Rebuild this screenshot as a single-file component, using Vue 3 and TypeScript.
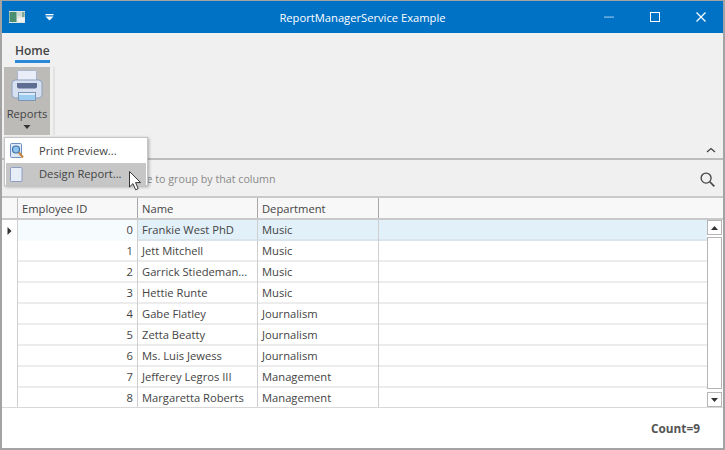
<script setup lang="ts">
interface Row { id: number; name: string; dept: string }
const rows: Row[] = [
  { id: 0, name: 'Frankie West PhD', dept: 'Music' },
  { id: 1, name: 'Jett Mitchell', dept: 'Music' },
  { id: 2, name: 'Garrick Stiedeman...', dept: 'Music' },
  { id: 3, name: 'Hettie Runte', dept: 'Music' },
  { id: 4, name: 'Gabe Flatley', dept: 'Journalism' },
  { id: 5, name: 'Zetta Beatty', dept: 'Journalism' },
  { id: 6, name: 'Ms. Luis Jewess', dept: 'Journalism' },
  { id: 7, name: 'Jefferey Legros III', dept: 'Management' },
  { id: 8, name: 'Margaretta Roberts', dept: 'Management' },
]
</script>

<template>
  <div class="window">
    <header class="titlebar">
      <div class="tb-left">
        <svg class="app-icon" width="16" height="12" viewBox="0 0 16 12">
          <rect width="16" height="12" fill="#dfe4e0" />
          <rect x="0.5" y="1" width="7" height="10" fill="#4a8f72" />
          <rect x="8.5" y="1" width="4" height="4" fill="#c9d8d0" />
          <rect x="13" y="1" width="2.5" height="5" fill="#7fa896" />
          <rect x="8.5" y="7" width="7" height="4" fill="#f0f0ec" />
        </svg>
        <svg class="qat" width="9" height="7" viewBox="0 0 9 7">
          <rect x="0.5" y="0" width="8" height="1.3" fill="#fff" />
          <path d="M0.5 2.4H8.5L4.5 6.6Z" fill="#fff" />
        </svg>
      </div>
      <div class="title">ReportManagerService Example</div>
      <div class="controls">
        <svg width="12" height="12" viewBox="0 0 12 12"><rect x="1" y="5.5" width="10" height="1.2" fill="#8fc0e8" /></svg>
        <svg width="12" height="12" viewBox="0 0 12 12"><rect x="1.5" y="1.5" width="9" height="9" fill="none" stroke="#fff" /></svg>
        <svg width="12" height="12" viewBox="0 0 12 12"><path d="M1.5 1.5L10.5 10.5M10.5 1.5L1.5 10.5" stroke="#fff" stroke-width="1.2" /></svg>
      </div>
    </header>

    <section class="ribbon">
      <div class="tabs"><span class="tab">Home</span></div>
      <div class="ribbon-body">
        <div class="big-btn">
          <svg width="32" height="32" viewBox="0 0 32 32">
            <rect x="6.5" y="0.5" width="19" height="13" rx="1" fill="#e9edf7" stroke="#aab4cc" />
            <rect x="1" y="10" width="30" height="18" rx="3.5" fill="#d6e0f0" stroke="#8d9fc0" />
            <path d="M6 13H26V16.5Q26 18.5 24 18.5H8Q6 18.5 6 16.5Z" fill="#5e6d92" />
            <rect x="7.5" y="22.5" width="17" height="8" fill="#9ccdf0" stroke="#7f96b4" />
            <rect x="8" y="23" width="16" height="2" fill="#dcebf8" />
          </svg>
          <span class="big-label">Reports</span>
          <svg class="caret" width="8" height="4" viewBox="0 0 8 4"><path d="M0.5 0H7.5L4 4Z" fill="#333" /></svg>
        </div>
        <div class="sep"></div>
      </div>
      <svg class="collapse" width="10" height="6" viewBox="0 0 10 6"><path d="M1 5L5 1.5L9 5" fill="none" stroke="#444" stroke-width="1.3" /></svg>
    </section>

    <section class="group-panel">
      <span class="group-text">Drag a column header here to group by that column</span>
      <svg class="search" width="15" height="15" viewBox="0 0 16 16">
        <circle cx="6.5" cy="6.5" r="5.3" fill="none" stroke="#444" stroke-width="1.4" />
        <path d="M10.4 10.4L15.3 15.3" stroke="#444" stroke-width="1.8" />
      </svg>
    </section>

    <section class="grid">
      <div class="grid-head">
        <div class="indicator"></div>
        <div class="hc c-id">Employee ID</div>
        <div class="hc c-name">Name</div>
        <div class="hc c-dept">Department</div>
        <div class="hc-fill"></div>
      </div>
      <div class="grid-main">
        <div class="grid-rows">
          <div v-for="r in rows" :key="r.id" class="row" :class="{ focused: r.id === 0 }">
            <div class="indicator">
              <svg v-if="r.id === 0" width="5" height="8" viewBox="0 0 5 8"><path d="M0.5 0L4.5 4L0.5 8Z" fill="#333" /></svg>
            </div>
            <div class="cell c-id num">{{ r.id }}</div>
            <div class="cell c-name">{{ r.name }}</div>
            <div class="cell c-dept">{{ r.dept }}</div>
            <div class="cell-fill"></div>
          </div>
        </div>
        <div class="scrollbar">
          <div class="sb-btn"><svg width="7" height="4" viewBox="0 0 7 4"><path d="M0 4H7L3.5 0Z" fill="#333" /></svg></div>
          <div class="sb-thumb"></div>
          <div class="sb-btn"><svg width="7" height="4" viewBox="0 0 7 4"><path d="M0 0H7L3.5 4Z" fill="#333" /></svg></div>
        </div>
      </div>
    </section>

    <footer class="footer"><span class="count">Count=9</span></footer>

    <div class="menu">
      <div class="menu-item">
        <svg width="14" height="16" viewBox="0 0 14 16">
          <rect x="0.5" y="0.5" width="11" height="14" rx="1" fill="#dce8f6" stroke="#6f8fc0" />
          <circle cx="6" cy="6.5" r="3.5" fill="#8fc4ec" stroke="#3f6fa8" stroke-width="1.2" />
          <path d="M8.8 9.5L13 14.5" stroke="#c8843c" stroke-width="2" />
        </svg>
        <span>Print Preview...</span>
      </div>
      <div class="menu-item hot">
        <svg width="14" height="16" viewBox="0 0 14 16">
          <rect x="0.5" y="0.5" width="11.5" height="14" rx="1" fill="#e8eef8" stroke="#8c9cc4" />
        </svg>
        <span>Design Report...</span>
      </div>
    </div>

    <svg class="cursor" width="13" height="20" viewBox="0 0 13 20">
      <path d="M0.5 0.5V16L4 12.6L6.6 18.8L9.2 17.7L6.6 11.6H11.6Z" fill="#fff" stroke="#222" stroke-width="0.9" />
    </svg>
  </div>
</template>

<style scoped>
.window {
  position: relative;
  box-sizing: border-box;
  width: 725px;
  height: 450px;
  display: flex;
  flex-direction: column;
  overflow: hidden;
  background: #fff;
  border: solid #a3a3a3;
  border-width: 1px 2px 2px 2px;
  font-family: "Open Sans", "Noto Sans", sans-serif;
  font-size: 11.2px;
  color: #444;
}
.titlebar {
  height: 32px;
  flex: none;
  display: flex;
  align-items: center;
  position: relative;
  background: #0072c6;
  color: #fff;
}
.tb-left { display: flex; align-items: center; gap: 20px; padding-left: 7px; }
.title {
  position: absolute;
  left: 0; right: 0;
  text-align: center;
  font-size: 11.2px;
}
.controls {
  margin-left: auto;
  display: flex;
  align-items: center;
  gap: 34px;
  padding-right: 16px;
  position: relative;
}
.ribbon {
  position: relative;
  flex: none;
  height: 125px;
  background: #f0f0f0;
  border-bottom: 2px solid #bdbdbd;
}
.tabs { padding: 9px 0 0 13px; height: 23px; }
.tab {
  display: inline-block;
  font-size: 12px;
  font-weight: 600;
  color: #444;
  height: 18px;
  line-height: 17px;
  border-bottom: 3px solid #2b88d8;
}
.ribbon-body { display: flex; padding: 2px 0 0 2px; }
.big-btn {
  width: 46px;
  height: 68px;
  background: #bcbbb8;
  display: flex;
  flex-direction: column;
  align-items: center;
  box-sizing: border-box;
  padding-top: 3px;
}
.big-label { font-size: 11.2px; line-height: 16px; margin-top: 4px; color: #444; }
.caret { margin-top: 3px; }
.sep { width: 2px; height: 68px; margin-left: 3px; background: #e2e2e2; }
.collapse { position: absolute; right: 7px; bottom: 5px; }
.group-panel {
  flex: none;
  height: 38px;
  box-sizing: border-box;
  background: #f0f0f0;
  border-bottom: 2px solid #c9c9c9;
  display: flex;
  align-items: center;
  justify-content: space-between;
  padding: 2px 8px 0 14px;
}
.group-text { color: #8a8a8a; font-size: 10.7px; }
.grid { flex: none; display: flex; flex-direction: column; }
.grid-head {
  display: flex;
  height: 22px;
  flex: none;
  box-sizing: border-box;
  background: #f8f8f8;
  border-bottom: 2px solid #c9c9c9;
}
.indicator {
  width: 15px;
  flex: none;
  box-sizing: content-box;
  border-right: 1px solid #cfcfcf;
  display: flex;
  align-items: center;
  justify-content: center;
  background: #fff;
}
.grid-head .indicator { background: #f8f8f8; border-right-color: #bdbdbd; }
.hc { box-sizing: border-box; display: flex; align-items: center; padding-left: 4px; border-right: 1px solid #a8a8a8; }
.c-id { width: 120px; flex: none; }
.c-name { width: 120px; flex: none; }
.c-dept { width: 121px; flex: none; }
.hc-fill, .cell-fill { flex: 1; }
.grid-main { display: flex; flex: none; height: 188px; box-sizing: border-box; border-bottom: 1px solid #d8d8d8; overflow: hidden; }
.grid-rows { flex: 1; min-width: 0; }
.row {
  display: flex;
  height: 21px;
  box-sizing: border-box;
  border-bottom: 2px solid #ececec;
}
.row .cell { box-sizing: border-box; display: flex; align-items: center; padding: 0 4px 2px; border-right: 1px solid #cfcfcf; margin-bottom: -2px; white-space: nowrap; overflow: hidden; }
.row .num { justify-content: flex-end; }
.row .indicator { margin-bottom: -2px; }
.row.focused { background: #e2f0f9; border-bottom-color: #dbe4ea; }
.row.focused .c-id { background: #f6fbfe; }
.scrollbar {
  width: 15px;
  flex: none;
  display: flex;
  flex-direction: column;
  box-sizing: content-box;
  background: #fff;
  padding-right: 1px;
}
.sb-btn {
  height: 15px;
  flex: none;
  box-sizing: border-box;
  border: 1px solid #b5b5b5;
  background: #fff;
  display: flex;
  align-items: center;
  justify-content: center;
}
.sb-thumb { flex: 1; border: 1px solid #b5b5b5; margin: 2px 0 3px; background: #fff; }
.footer {
  flex: 1;
  display: flex;
  align-items: center;
  justify-content: flex-end;
  padding-right: 23px;
  background: #fff;
}
.count { font-weight: 700; font-size: 11.8px; color: #555; }
.menu {
  position: absolute;
  left: 2px;
  top: 136px;
  width: 144px;
  height: 49px;
  box-sizing: border-box;
  padding: 1px;
  background: #fff;
  border: 1px solid #c4c4c4;
  box-shadow: 1px 1px 3px rgba(0, 0, 0, 0.3);
}
.menu-item {
  height: 23px;
  display: flex;
  align-items: center;
  gap: 15px;
  padding-left: 4px;
  color: #444;
}
.menu-item span { margin-top: -1px; }
.menu-item.hot { background: #c6c6c6; margin-top: 1px; }
.menu-item.hot span { margin-top: -3px; }
.cursor { position: absolute; left: 127px; top: 170px; }
</style>
